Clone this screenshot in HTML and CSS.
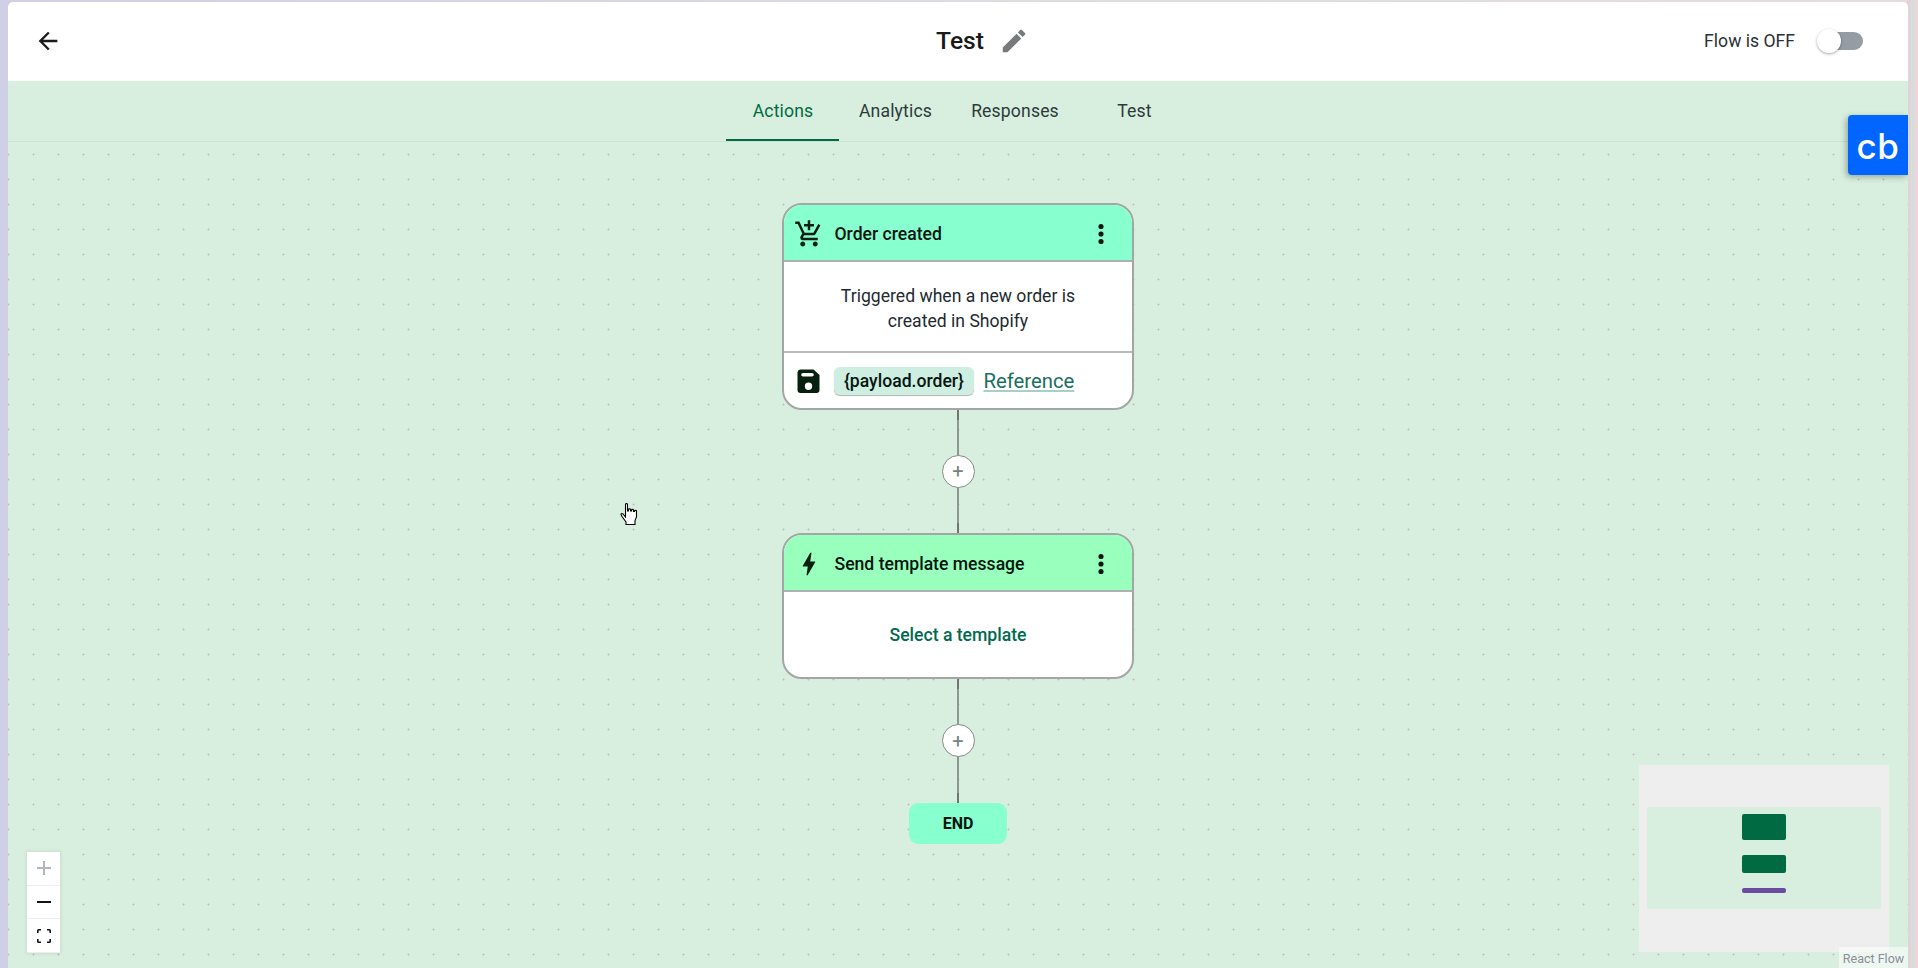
FILE: index.html
```html
<!DOCTYPE html>
<html lang="en">
<head>
<meta charset="utf-8">
<title>Test</title>
<link rel="stylesheet" href="styles.css">
</head>
<body>
<div class="app">
  <header class="topbar">
    <button class="back" aria-label="Back"><svg viewBox="0 0 24 24" class="i28"><path d="M20 11H7.83l5.59-5.59L12 4l-8 8 8 8 1.41-1.41L7.83 13H20v-2z"/></svg></button>
    <div class="title">
      <span class="title-text">Test</span>
      <svg viewBox="0 0 24 24" class="pencil"><path d="M3 17.25V21h3.75L17.81 9.94l-3.75-3.75L3 17.25zM20.71 7.04c.39-.39.39-1.02 0-1.41l-2.34-2.34c-.39-.39-1.02-.39-1.41 0l-1.83 1.83 3.75 3.75 1.83-1.83z"/></svg>
    </div>
    <div class="status">
      <span>Flow is OFF</span>
      <span class="switch"><span class="thumb"></span></span>
    </div>
  </header>
  <nav class="tabs">
    <a class="tab tab-actions active">Actions</a>
    <a class="tab tab-analytics">Analytics</a>
    <a class="tab tab-responses">Responses</a>
    <a class="tab tab-test">Test</a>
  </nav>
  <main class="canvas">
    <div class="flow">
      <section class="node node-order">
        <div class="node-head head-order">
          <svg viewBox="0 0 24 24" class="head-icon"><path d="M11 9h2V6h3V4h-3V1h-2v3H8v2h3v3zm-4 9c-1.1 0-1.99.9-1.99 2S5.9 22 7 22s2-.9 2-2-.9-2-2-2zm10 0c-1.1 0-1.99.9-1.99 2s.89 2 1.99 2 2-.9 2-2-.9-2-2-2zm-9.83-3.25l.03-.12.9-1.63h7.45c.75 0 1.41-.41 1.75-1.03l3.86-7.01L19.42 4h-.01l-1.1 2-2.76 5H8.53l-.13-.27L6.16 6l-.95-2-.94-2H1v2h2l3.6 7.59-1.35 2.45c-.16.28-.25.61-.25.96 0 1.1.9 2 2 2h12v-2H7.42c-.13 0-.25-.11-.25-.25z"/></svg>
          <span class="head-label">Order created</span>
          <svg viewBox="0 0 24 24" class="more"><circle cx="12" cy="5.6" r="2.2"/><circle cx="12" cy="12" r="2.2"/><circle cx="12" cy="18.4" r="2.2"/></svg>
        </div>
        <p class="node-desc">Triggered when a new order is<br>created in Shopify</p>
        <div class="node-foot">
          <svg viewBox="0 0 24 24" class="save"><path fill-rule="evenodd" d="M4 .5h13.5L23.5 6v15a3 3 0 0 1-3 3h-16a3 3 0 0 1-3-3V3.5a3 3 0 0 1 2.5-3zM7 4a1.8 1.8 0 0 0 0 3.6h9A1.8 1.8 0 0 0 16 4zm5.500 9.500a3.700 3.700 0 1 0 0 7.400 3.700 3.700 0 0 0 0-7.400z"/></svg>
          <span class="chip">{payload.order}</span>
          <a class="ref">Reference</a>
        </div>
      </section>
      <div class="edge edge-first"><button class="add">+</button></div>
      <section class="node node-send">
        <div class="node-head head-send">
          <svg viewBox="0 0 24 24" class="head-icon"><path d="M11 21h-1l1-7H7.500c-.58 0-.57-.32-.38-.66.19-.34.05-.08.07-.12C8.480 10.940 10.420 7.540 13 3h1l-1 7h3.500c.49 0 .56.33.47.51l-.07.15C12.960 17.550 11 21 11 21z"/></svg>
          <span class="head-label">Send template message</span>
          <svg viewBox="0 0 24 24" class="more"><circle cx="12" cy="5.6" r="2.2"/><circle cx="12" cy="12" r="2.2"/><circle cx="12" cy="18.4" r="2.2"/></svg>
        </div>
        <p class="node-select">Select a template</p>
      </section>
      <div class="edge"><button class="add">+</button></div>
      <div class="end">END</div>
    </div>

    <div class="controls">
      <button class="ctrl ctrl-off"><svg viewBox="0 0 16 16"><path d="M7 1h2v6h6v2H9v6H7V9H1V7h6z"/></svg></button>
      <button class="ctrl"><svg viewBox="0 0 16 16"><path d="M1 7h14v2H1z"/></svg></button>
      <button class="ctrl"><svg viewBox="0 0 16 16"><path d="M1 5V2.500A1.500 1.500 0 0 1 2.500 1H5v1.600H2.600V5zM11 1h2.500A1.500 1.500 0 0 1 15 2.500V5h-1.600V2.600H11zM1 11h1.600v2.400H5V15H2.500A1.500 1.500 0 0 1 1 13.500zM13.400 11H15v2.500a1.500 1.500 0 0 1-1.500 1.500H11v-1.600h2.400z"/></svg></button>
    </div>

    <div class="minimap">
      <div class="mini-view">
        <span class="mini-node mini-a"></span>
        <span class="mini-node mini-b"></span>
        <span class="mini-node mini-c"></span>
      </div>
    </div>
    <div class="attribution">React Flow</div>
    <a class="cb">cb</a>
    <svg class="cursor" viewBox="0 0 17 22"><path d="M5 1.500c0-1.300 2-1.300 2 0V8h1V6.500c0-.9 2-.9 2 0V8h1V7c0-.9 2-.9 2 0v1.500h1V8c0-.8 2-.8 2 0v6l-1.500 3.500V21.500H5.500V19L1.500 13.500 .5 11.500c0-1.200 1.300-1.200 2-.5L5 14z" fill="#fff" stroke="#000" stroke-width="1.100"/></svg>
  </main>
</div>
</body>
</html>
```
FILE: styles.css
```css
* { box-sizing: border-box; }
html, body { height: 100%; }
body {
  margin: 0;
  padding: 2px 10px 0 8px;
  height: 968px;
  overflow: hidden;
  font-family: Roboto, "Liberation Sans", sans-serif;
  background: linear-gradient(90deg, #cfcfe6 0, #cfcfe6 8px, #dcdde2 960px, #e6dcdc 1907px, #e3d3d3 1907px, #e3d3d3 1911px, #d3dfe0 1911px, #d3dfe0 1914px, #e8d8d8 1914px);
}
button { font: inherit; padding: 0; border: 0; background: none; }
svg { display: block; fill: currentColor; }

.app { height: 966px; display: flex; flex-direction: column; border-radius: 5px 5px 0 0; overflow: hidden; }

.topbar {
  height: 79px;
  flex: none;
  background: #fff;
  display: grid;
  grid-template-columns: 1fr auto 1fr;
  align-items: center;
  padding: 0 45px 2px;
  color: #1c1c1c;
}
.back { justify-self: start; color: #1a1a1a; width: 28px; height: 28px; margin-left: -19px; }
.i28 { width: 28px; height: 28px; }
.title { display: flex; align-items: center; gap: 15px; margin-left: 4px; }
.title-text { font-size: 24.6px; font-weight: 500; color: #1a1a1a; }
.pencil { width: 30px; height: 30px; color: #757b7b; margin-right: -45px; }
.status { justify-self: end; display: flex; align-items: center; gap: 30px; font-size: 17.6px; color: #2a3035; }
.switch { position: relative; display: block; width: 38px; height: 18px; background: #969ca3; border-radius: 9px; }
.thumb { position: absolute; left: -8px; top: -3px; width: 24px; height: 24px; border-radius: 50%; background: #fff; box-shadow: 0 1px 3px rgba(0,0,0,.35); }

.tabs {
  height: 61px;
  flex: none;
  background: #d8efdf;
  border-bottom: 1px solid #cfe0d6;
  display: flex;
  justify-content: center;
  font-size: 17.6px;
  font-weight: 400;
  letter-spacing: .15px;
  color: #2d3a3a;
}
.tab { display: flex; align-items: center; justify-content: center; height: 60px; padding-bottom: 1px; }
.tab-actions { width: 113px; margin-left: 1px; }
.tab-analytics { width: 113px; }
.tab-responses { width: 126px; }
.tab-test { width: 113px; }
.active { color: #006a42; border-bottom: 2px solid #006a42; padding: 1px 0 0 1px; }

.canvas {
  position: relative;
  flex: 1;
  min-height: 0;
  background-color: #d8efdf;
  background-image: radial-gradient(circle at center, #c9b6c6 0, #c9b6c6 .8px, transparent 1.2px);
  background-size: 25px 25px;
  background-position: -12px 0;
}

.flow { display: flex; flex-direction: column; align-items: center; padding-top: 61px; }

.node {
  width: 352px;
  background: #fff;
  border: 2px solid #a3a6a4;
  border-radius: 20px;
  overflow: hidden;
  font-size: 17.6px;
}
.node-order { height: 207px; }
.node-send { height: 146px; }
.node-head {
  height: 57px;
  display: flex;
  align-items: center;
  padding: 2px 17px 0 9.5px;
  border-bottom: 2px solid #adb2b0;
  color: #06150f;
  font-weight: 500;
}
.head-order { background: #88ffcf; }
.head-send { background: #98ffbc; }
.head-icon { width: 30px; height: 30px; flex: none; color: #06200f; }
.head-label { flex: 1; margin-left: 11px; }
.more { width: 28px; height: 28px; color: #06150f; }
.node-desc {
  margin: 0;
  height: 91px;
  padding-top: 5px;
  display: flex;
  align-items: center;
  justify-content: center;
  text-align: center;
  line-height: 25px;
  color: #222a30;
  border-bottom: 2px solid #b9bcba;
}
.node-foot { display: flex; align-items: center; height: 55px; padding: 0 11.5px; }
.save { width: 24px; height: 24px; color: #06200f; margin-right: 14px; flex: none; }
.chip {
  background: #cdeee0;
  border-radius: 6px;
  box-shadow: 0 1px 1px rgba(0,0,0,.3);
  padding: 0 10.5px;
  height: 28px;
  line-height: 28px;
  color: #06150f;
  font-weight: 500;
}
.ref { margin-left: 9px; font-size: 20.3px; color: #1a7060; text-decoration: underline; text-decoration-color: #a8cfc4; }
.node-select {
  margin: 0;
  height: 85px;
  display: flex;
  align-items: center;
  justify-content: center;
  color: #006a50;
  font-weight: 500;
}
.edge {
  width: 33px;
  height: 124px;
  display: flex;
  align-items: center;
  justify-content: center;
  background: linear-gradient(#6f7573 0 10px, #8a9a92 10px calc(100% - 10px), #6f7573 calc(100% - 10px)) center / 2px 100% no-repeat;
}
.edge-first { height: 123px; }
.add {
  width: 33px;
  height: 33px;
  border-radius: 50%;
  background: #fff;
  border: 1.5px solid #868a88;
  color: #76837f;
  font-size: 20px;
  line-height: 26px;
  font-weight: 400;
  margin-top: -1px;
}
.end {
  width: 98px;
  height: 41px;
  border-radius: 9px;
  background: #88ffcf;
  display: flex;
  align-items: center;
  justify-content: center;
  font-size: 16px;
  font-weight: 700;
  color: #06150f;
}

.controls {
  position: absolute;
  left: 19px;
  top: 710px;
  width: 33px;
  background: #fff;
  box-shadow: 0 0 3px 1px rgba(0,0,0,.08);
  display: flex;
  flex-direction: column;
}
.ctrl { height: 33.7px; display: flex; align-items: center; justify-content: center; border-bottom: 1px solid #eee; color: #111; }
.ctrl svg { width: 16px; height: 16px; }
.ctrl-off { color: #b3b8bd; }

.minimap {
  position: absolute;
  left: 1631px;
  top: 623px;
  width: 250px;
  height: 187px;
  background: #eeeeee;
  display: flex;
  align-items: center;
  padding: 0 8px;
}
.mini-view { flex: 1; height: 102px; background: #d8efdf; display: flex; flex-direction: column; align-items: center; padding-top: 7px; margin-top: -1px; }
.mini-node { display: block; width: 44px; border-radius: 2px; background: #006a42; }
.mini-a { height: 26px; }
.mini-b { height: 18px; margin-top: 15px; }
.mini-c { height: 5px; margin-top: 15px; background: #6a4ca0; }

.attribution {
  position: absolute;
  right: 0;
  bottom: 0;
  width: 69px;
  height: 21px;
  background: rgba(255,255,255,.5);
  font-size: 12.5px;
  line-height: 23px;
  text-align: center;
  color: #8d8d9a;
}
.cb {
  position: absolute;
  right: 0;
  top: -27px;
  width: 60px;
  height: 60px;
  background: #0066ff;
  border-radius: 4px 0 0 4px;
  box-shadow: -2px 2px 6px rgba(0,0,0,.3);
  color: #fff;
  font-family: Inter, sans-serif;
  font-weight: 500;
  font-size: 35px;
  letter-spacing: .5px;
  line-height: 62px;
  text-align: center;
}
.cursor { position: absolute; left: 612px; top: 361px; width: 18px; height: 22px; }
```
